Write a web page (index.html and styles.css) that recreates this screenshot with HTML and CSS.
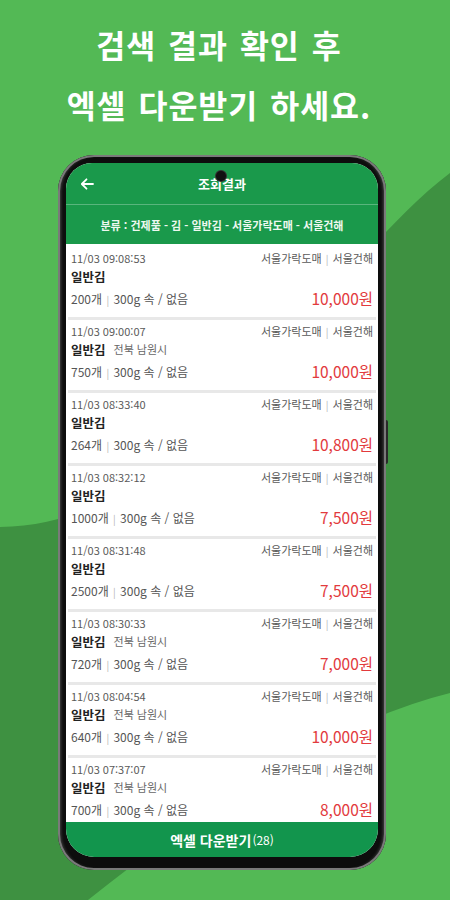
FILE: index.html
```html
<!DOCTYPE html>
<html lang="ko">
<head>
<meta charset="utf-8">
<title>조회결과</title>
<link rel="stylesheet" href="styles.css">
</head>
<body>
<header class="promo">
  <p class="promo-line">검색 결과 확인 후</p>
  <p class="promo-line">엑셀 다운받기 하세요.</p>
</header>
<div class="phone">
  <span class="camera"></span>
  <span class="side-key"></span>
  <div class="screen">
    <div class="appbar">
      <svg class="back" width="14" height="12" viewBox="0 0 14 12"><path d="M13 6H2M6.5 1.3L1.8 6l4.7 4.7" fill="none" stroke="#fff" stroke-width="1.8" stroke-linecap="round" stroke-linejoin="round"/></svg>
      <h1 class="title">조회결과</h1>
      <span></span>
    </div>
    <div class="crumbs">분류 : 건제품 - 김 - 일반김 - 서울가락도매 - 서울건해</div>
    <ul class="list">
      <li class="item"><div class="item-in">
        <div class="meta"><span>11/03 09:08:53</span><span>서울가락도매 <i class="bar">|</i> 서울건해</span></div>
        <div class="name"><b>일반김</b></div>
        <div class="detail"><span>200개 <i class="bar">|</i> 300g 속 / 없음</span><span class="price">10,000원</span></div>
      </div></li>
      <li class="item"><div class="item-in">
        <div class="meta"><span>11/03 09:00:07</span><span>서울가락도매 <i class="bar">|</i> 서울건해</span></div>
        <div class="name"><b>일반김</b><span class="region">전북 남원시</span></div>
        <div class="detail"><span>750개 <i class="bar">|</i> 300g 속 / 없음</span><span class="price">10,000원</span></div>
      </div></li>
      <li class="item"><div class="item-in">
        <div class="meta"><span>11/03 08:33:40</span><span>서울가락도매 <i class="bar">|</i> 서울건해</span></div>
        <div class="name"><b>일반김</b></div>
        <div class="detail"><span>264개 <i class="bar">|</i> 300g 속 / 없음</span><span class="price">10,800원</span></div>
      </div></li>
      <li class="item"><div class="item-in">
        <div class="meta"><span>11/03 08:32:12</span><span>서울가락도매 <i class="bar">|</i> 서울건해</span></div>
        <div class="name"><b>일반김</b></div>
        <div class="detail"><span>1000개 <i class="bar">|</i> 300g 속 / 없음</span><span class="price">7,500원</span></div>
      </div></li>
      <li class="item"><div class="item-in">
        <div class="meta"><span>11/03 08:31:48</span><span>서울가락도매 <i class="bar">|</i> 서울건해</span></div>
        <div class="name"><b>일반김</b></div>
        <div class="detail"><span>2500개 <i class="bar">|</i> 300g 속 / 없음</span><span class="price">7,500원</span></div>
      </div></li>
      <li class="item"><div class="item-in">
        <div class="meta"><span>11/03 08:30:33</span><span>서울가락도매 <i class="bar">|</i> 서울건해</span></div>
        <div class="name"><b>일반김</b><span class="region">전북 남원시</span></div>
        <div class="detail"><span>720개 <i class="bar">|</i> 300g 속 / 없음</span><span class="price">7,000원</span></div>
      </div></li>
      <li class="item"><div class="item-in">
        <div class="meta"><span>11/03 08:04:54</span><span>서울가락도매 <i class="bar">|</i> 서울건해</span></div>
        <div class="name"><b>일반김</b><span class="region">전북 남원시</span></div>
        <div class="detail"><span>640개 <i class="bar">|</i> 300g 속 / 없음</span><span class="price">10,000원</span></div>
      </div></li>
      <li class="item"><div class="item-in">
        <div class="meta"><span>11/03 07:37:07</span><span>서울가락도매 <i class="bar">|</i> 서울건해</span></div>
        <div class="name"><b>일반김</b><span class="region">전북 남원시</span></div>
        <div class="detail"><span>700개 <i class="bar">|</i> 300g 속 / 없음</span><span class="price">8,000원</span></div>
      </div></li>
    </ul>
    <div class="download"><b>엑셀 다운받기</b><span class="count">(28)</span></div>
  </div>
</div>
</body>
</html>
```

FILE: styles.css
```css
html, body {
  margin: 0;
  padding: 0;
}
body {
  width: 450px;
  height: 900px;
  overflow: hidden;
  font-family: "Noto Sans CJK KR", "Noto Sans", sans-serif;
  background: #53b955 url("data:image/svg+xml,%3Csvg xmlns='http://www.w3.org/2000/svg' width='450' height='900' viewBox='0 0 450 900'%3E%3Cpath d='M0 527 C200 525 320 270 450 173 L450 693 Q300 730 88 900 L0 900 Z' fill='%233e9141'/%3E%3C/svg%3E") no-repeat 0 0 / 450px 900px;
}
.promo {
  padding: 14px 12px 0 0;
  text-align: center;
  color: #fff;
}
.promo-line {
  margin: 0;
  font-size: 31.5px;
  line-height: 60px;
  font-weight: 700;
  letter-spacing: 1px;
  word-spacing: 2px;
}
.phone {
  position: relative;
  margin: 21px 0 0 58px;
  width: 328px;
  height: 715px;
  box-sizing: border-box;
  padding: 8px 8px 13px 8px;
  border-radius: 36px;
  background: #0d0d0d;
  box-shadow: inset 0 0 0 2px #7a7a7a, inset 3px 0 3px #444, inset -3px 0 3px #444;
}
.camera {
  position: absolute;
  top: 16px;
  left: 158px;
  width: 10px;
  height: 10px;
  border-radius: 50%;
  background: #111;
  box-shadow: 0 0 0 1px #333;
  z-index: 2;
}
.side-key {
  position: absolute;
  right: -2px;
  top: 265px;
  width: 2px;
  height: 44px;
  border-radius: 0 2px 2px 0;
  background: #2a2a2a;
}
.screen {
  height: 100%;
  display: flex;
  flex-direction: column;
  border-radius: 26px 26px 28px 28px;
  overflow: hidden;
  background: #fff;
}
.appbar {
  height: 41px;
  flex: none;
  display: grid;
  grid-template-columns: 40px 1fr 40px;
  align-items: center;
  background: #1a994b;
}
.back {
  margin-left: 14px;
}
.title {
  margin: 0;
  text-align: center;
  color: #fff;
  font-size: 13px;
  font-weight: 700;
}
.crumbs {
  height: 39px;
  flex: none;
  display: flex;
  align-items: center;
  justify-content: center;
  border-top: 1px solid rgba(255, 255, 255, 0.28);
  background: #1a994b;
  color: #eef8f0;
  font-size: 11px;
  font-weight: 700;
  white-space: nowrap;
}
.list {
  flex: 1;
  margin: 0;
  padding: 3px 0 0;
  list-style: none;
  overflow: hidden;
  background: #fff;
}
.item {
  padding: 0 2px;
}
.item-in {
  box-sizing: border-box;
  height: 73px;
  padding: 3px 3px 0;
  border-bottom: 3px solid #e8e8e8;
  color: #555;
}
.meta, .detail {
  display: flex;
  justify-content: space-between;
  align-items: center;
}
.meta {
  height: 16px;
  font-size: 11px;
  color: #5a5a5a;
}
.name {
  height: 20px;
  display: flex;
  align-items: center;
  gap: 8px;
}
.name b {
  font-size: 12.5px;
  font-weight: 700;
  color: #222;
}
.region {
  font-size: 11px;
  color: #666;
}
.detail {
  height: 24px;
  font-size: 12px;
  color: #555;
}
.bar {
  font-style: normal;
  color: #b5b5b5;
  font-size: 10px;
  margin: 0 1px;
}
.price {
  font-size: 15.5px;
  color: #e23a3d;
}
.download {
  height: 35px;
  flex: none;
  display: flex;
  align-items: center;
  justify-content: center;
  gap: 1px;
  background: #12954d;
  color: #fff;
}
.download b {
  font-size: 14px;
  font-weight: 700;
}
.count {
  font-size: 12px;
}
```
